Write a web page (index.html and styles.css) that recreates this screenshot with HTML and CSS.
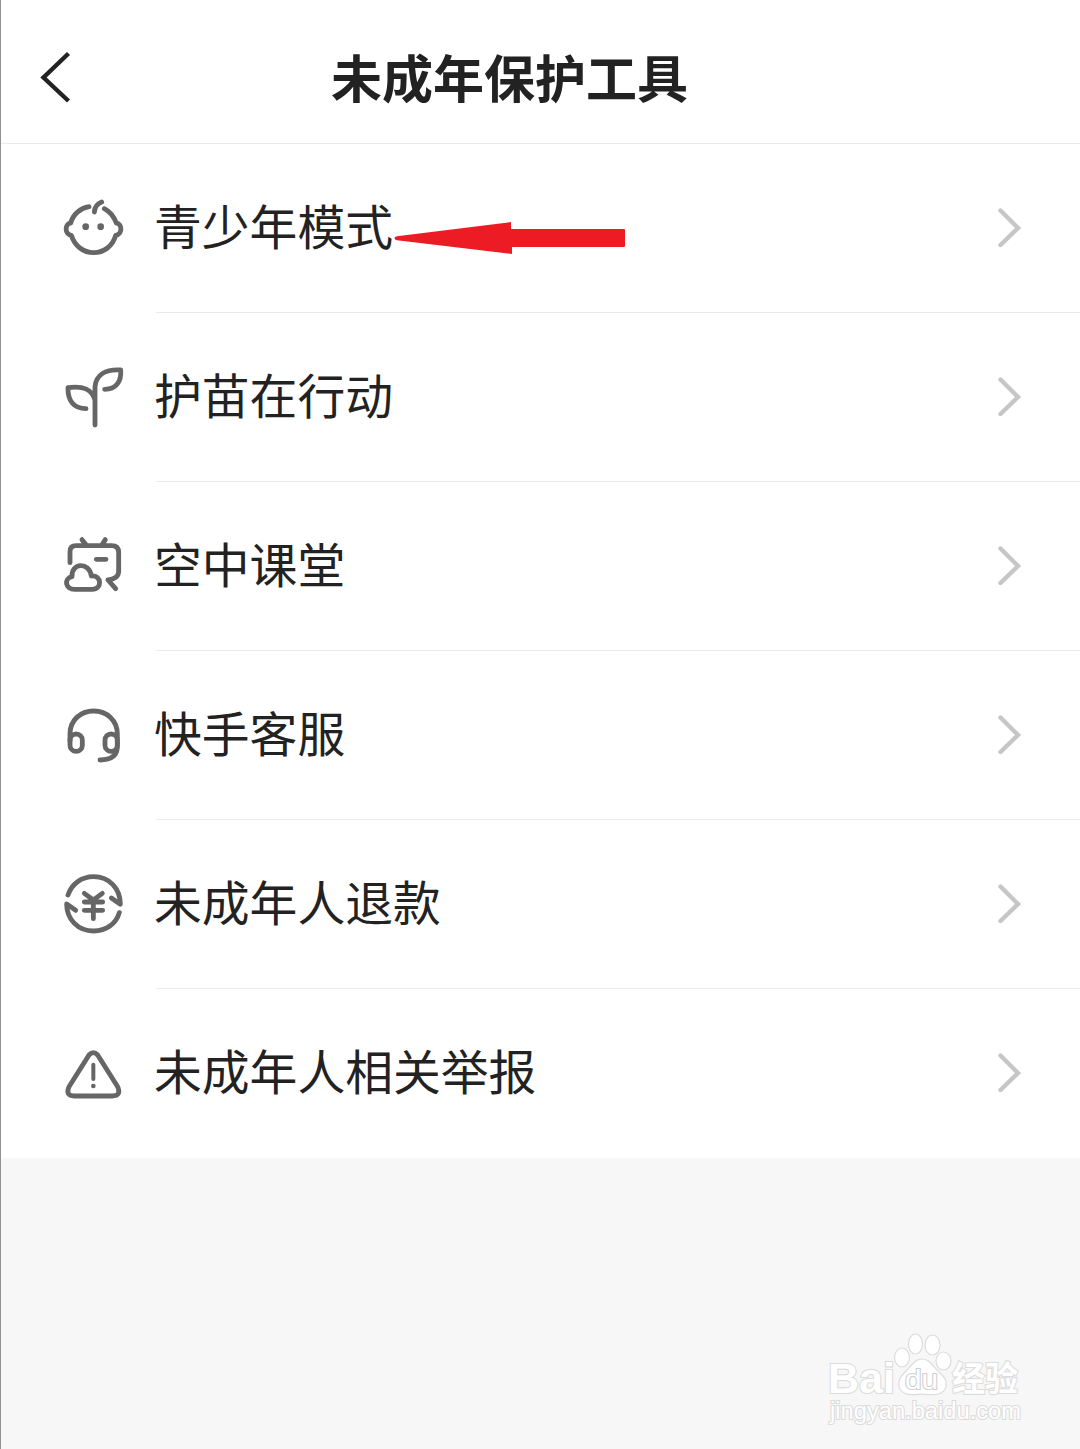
FILE: index.html
```html
<!DOCTYPE html>
<html lang="zh-CN">
<head>
<meta charset="utf-8">
<title>未成年保护工具</title>
<link rel="stylesheet" href="styles.css">
</head>
<body>
<main class="screen">
  <header class="header">
    <svg class="back" viewBox="0 0 120 120"><path d="M68.5 53.5 43.5 77.5 68.5 101"/></svg>
    <h1 class="title">未成年保护工具</h1>
  </header>
  <ul class="list">
    <li class="row">
      <svg class="icon" viewBox="0 -6 270 270"><path d="M117 65C91 69 69 88 62 114C44 116 43 148 64 151C74 183 100 203 131 203C162 203 188 183 197 151C218 148 217 116 199 114C192 96 180 80 163 71M133 81C134 66 142 56 155 51"/><circle class="dot" cx="107" cy="125" r="10"/><circle class="dot" cx="152" cy="125" r="10"/></svg>
      <div class="cell"><span class="label">青少年模式</span><svg class="chevron" viewBox="0 0 40 60"><path d="M10.5 12.5 28 30 10.5 47"/></svg></div>
      <svg class="pointer" viewBox="0 0 232 34"><path d="M0.5 17Q0.5 15.5 5 15L117 1V8H230Q231 8 231 9V25Q231 26 230 26H118V33L5 19.5Q0.5 19 0.5 17Z"/></svg>
    </li>
    <li class="row">
      <svg class="icon" viewBox="0 -9 270 270"><path d="M135 210V96C138 60 167 42 212 45C215 80 198 103 164 103M135 136C128 105 99 91 54 98C53 137 71 161 108 161"/></svg>
      <div class="cell"><span class="label">护苗在行动</span><svg class="chevron" viewBox="0 0 40 60"><path d="M10.5 12.5 28 30 10.5 47"/></svg></div>
    </li>
    <li class="row">
      <svg class="icon" viewBox="0 -12 270 270"><path d="M60 113V80Q60 62 78 62H185Q206 62 206 83V139Q206 161 174 165L197 191M96 44 107 58M166 44 157 58M139 103H168"/><path d="M74 193C45 193 41 160 66 155C63 113 119 110 124 153C156 150 157 193 127 193Z"/></svg>
      <div class="cell"><span class="label">空中课堂</span><svg class="chevron" viewBox="0 0 40 60"><path d="M10.5 12.5 28 30 10.5 47"/></svg></div>
    </li>
    <li class="row">
      <svg class="icon" viewBox="0 -15 270 270"><path d="M60 138V117C60 76 91 48 131 48C171 48 202 77 202 117V154C202 181 184 195 150 195"/><rect x="60" y="117" width="37" height="52" rx="18.5"/><rect x="165" y="117" width="37" height="52" rx="18.5"/></svg>
      <div class="cell"><span class="label">快手客服</span><svg class="chevron" viewBox="0 0 40 60"><path d="M10.5 12.5 28 30 10.5 47"/></svg></div>
    </li>
    <li class="row">
      <svg class="icon" viewBox="0 -3 270 270"><path d="M54 105C65 72 94 50 131 50C178 50 211 86 211 133L184 114M208 158C198 192 168 213 131 213C83 213 50 177 50 132L77 151"/><path d="M103 100 130 120 157 100M103 126H158M103 151H158M130 120V176"/></svg>
      <div class="cell"><span class="label">未成年人退款</span><svg class="chevron" viewBox="0 0 40 60"><path d="M10.5 12.5 28 30 10.5 47"/></svg></div>
    </li>
    <li class="row">
      <svg class="icon" viewBox="0 -6 270 270"><path d="M117 75Q130 61 143 75L203 170Q215 198 187 198H73Q45 198 57 170Z"/><path class="thin" d="M130 104V147"/><circle class="dot" cx="130" cy="168" r="7"/></svg>
      <div class="cell"><span class="label">未成年人相关举报</span><svg class="chevron" viewBox="0 0 40 60"><path d="M10.5 12.5 28 30 10.5 47"/></svg></div>
    </li>
  </ul>
  <footer class="footer">
    <svg class="watermark" viewBox="0 0 230 120">
      <text class="wm-latin" x="18" y="73" textLength="67" lengthAdjust="spacingAndGlyphs">Bai</text>
      <ellipse cx="92" cy="37.5" rx="7.5" ry="9.5"/>
      <ellipse cx="105.5" cy="24" rx="7" ry="10"/>
      <ellipse cx="122.5" cy="25" rx="7.5" ry="10"/>
      <ellipse cx="133.5" cy="41" rx="7.5" ry="9"/>
      <path d="M112 39C119 39 123 46 128 51C136 58 138 63 135 69C131 76 122 75 112 74C102 75 94 76 90 69C86 61 92 55 97 50C102 45 105 39 112 39Z"/>
      <text class="wm-du" x="95" y="69" textLength="33" lengthAdjust="spacingAndGlyphs">du</text>
      <text class="wm-cjk" x="142" y="71" textLength="66" lengthAdjust="spacingAndGlyphs">经验</text>
      <text class="wm-url" x="20" y="99" textLength="191" lengthAdjust="spacingAndGlyphs">jingyan.baidu.com</text>
    </svg>
  </footer>
</main>
</body>
</html>
```
FILE: styles.css
```css
* { box-sizing: border-box; }
body {
  margin: 0;
  background: #f7f7f7;
  color: #222;
  font-family: "Noto Sans CJK SC", sans-serif;
}
.screen {
  display: flex;
  flex-direction: column;
  width: 1080px;
  height: 1449px;
  border-left: 1px solid #929292;
}
.header {
  display: flex;
  height: 144px;
  background: #fff;
  border-bottom: 1px solid #ebebeb;
}
.back {
  width: 120px;
  height: 120px;
  margin-left: -1px;
  fill: none;
  stroke: #222;
  stroke-width: 4.4;
}
.title {
  margin: 38px 0 0 211px;
  font-size: 51px;
  line-height: 76px;
  font-weight: 700;
  white-space: nowrap;
}
.list {
  margin: 0;
  padding: 0;
  list-style: none;
  background: #fff;
}
.row {
  position: relative;
  display: flex;
  align-items: center;
  height: 169px;
  padding-left: 49px;
}
.icon {
  flex: none;
  width: 90px;
  height: 90px;
  margin-top: -1px;
  fill: none;
  stroke: #666;
  stroke-width: 14.5;
  stroke-linecap: round;
  stroke-linejoin: round;
}
.dot { fill: #666; stroke: none; }
.thin { stroke-width: 12; }
.cell {
  display: flex;
  flex: 1;
  align-items: center;
  justify-content: space-between;
  height: 169px;
  margin-left: 16px;
  padding-right: 50px;
  border-bottom: 1px solid #ebebeb;
}
.row:last-child .cell { border-color: transparent; }
.label {
  margin-left: -2px;
  padding-bottom: 6px;
  font-size: 47.8px;
  line-height: 70px;
  white-space: nowrap;
}
.chevron {
  width: 40px;
  height: 60px;
  fill: none;
  stroke: #c6c6c6;
  stroke-width: 4.4;
  stroke-linecap: round;
}
.pointer {
  position: absolute;
  left: 393px;
  top: 77px;
  width: 232px;
  height: 34px;
  fill: #ed1c24;
}
.footer {
  display: flex;
  flex: 1;
  align-items: flex-end;
  justify-content: flex-end;
  padding: 0 40px 9px 0;
}
.watermark {
  width: 230px;
  height: 120px;
  fill: #fff;
  stroke: #dcdcdc;
  stroke-width: 1.2;
}
.watermark text {
  stroke-width: 2.2;
  paint-order: stroke;
}
.wm-latin { font: 700 43px "Liberation Sans", sans-serif; }
.watermark .wm-du {
  font: 400 28px "Liberation Sans", sans-serif;
  stroke: #d0d0d0;
}
.wm-cjk { font: 700 34px "Noto Sans CJK SC", sans-serif; }
.wm-url { font: 400 23px "Liberation Sans", sans-serif; }
```
